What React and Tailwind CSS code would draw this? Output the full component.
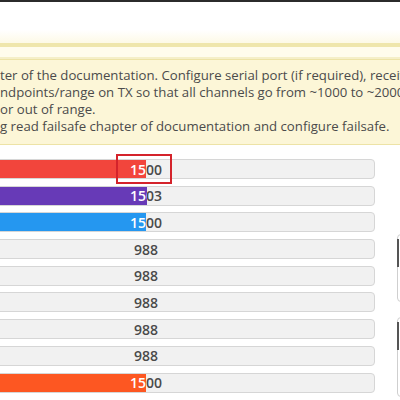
import React from 'react';

const channels = [
  { value: 1500, color: 'bg-[#f2453c]' },
  { value: 1503, color: 'bg-[#673ab7]' },
  { value: 1500, color: 'bg-[#2597f0]' },
  { value: 988, color: 'bg-[#fd8a3a]' },
  { value: 988, color: 'bg-[#fd8a3a]' },
  { value: 988, color: 'bg-[#fd8a3a]' },
  { value: 988, color: 'bg-[#fd8a3a]' },
  { value: 988, color: 'bg-[#fd8a3a]' },
  { value: 1500, color: 'bg-[#fd5722]' },
];

const noticeLines = [
  'ter of the documentation. Configure serial port (if required), receiver mode (serial/ppm/pwm)',
  'ndpoints/range on TX so that all channels go from ~1000 to ~2000. Set midpoint',
  'or out of range.',
  'g read failsafe chapter of documentation and configure failsafe.',
];

// bar spans 1000..2000
const fillPct = (v) => Math.max(0, Math.min(100, ((v - 1000) / 1000) * 100));

const ChannelBar = ({ value, color }) => (
  <div className="relative h-[20px] w-[458px] rounded-[4px] border border-[#d6d6d6] bg-[#f1f1f1] overflow-hidden">
    <div className="absolute inset-0 flex items-center justify-center text-[14px] font-semibold text-[#4a4a4a]">
      {value}
    </div>
    <div className={`absolute left-0 top-0 bottom-0 overflow-hidden ${color}`} style={{ width: `${fillPct(value)}%` }}>
      <div className="flex h-full w-[456px] items-center justify-center text-[14px] font-semibold text-white">
        {value}
      </div>
    </div>
  </div>
);

const App = () => {
  return (
    <div className="relative h-[400px] w-[400px] overflow-hidden bg-white font-['Open_Sans',sans-serif]">
      {/* top window edge */}
      <div className="h-[2px] bg-[#2b2b2b]" />
      <div className="h-[28px] bg-white" />
      <div className="h-[13px] bg-gradient-to-b from-white to-[#fdf9e6]" />
      <div className="h-[4px] bg-[#efe6ac]" />
      <div className="h-[10px] bg-[#fffcec]" />
      <div className="h-[2px] bg-[#f5efc8]" />

      {/* receiver notice */}
      <div className="h-[86px] border-y border-[#ede3a6] bg-[#fcf6d7] pt-[7px] text-[13.2px] leading-[17px] text-[#4b4b4b]">
        {noticeLines.map((line) => (
          <div key={line} className="whitespace-nowrap">
            {line}
          </div>
        ))}
      </div>

      {/* channels */}
      <div className="mt-[14px] flex gap-[22px]">
        <div className="-ml-[83px] flex flex-col gap-[6.7px]">
          {channels.map((ch, i) => (
            <ChannelBar key={i} value={ch.value} color={ch.color} />
          ))}
        </div>
        <div className="flex flex-col pt-[75px] gap-[15px]">
          <div className="relative h-[68px] w-[40px] rounded-[4px] border border-[#cfcfcf]">
            <div className="absolute -left-px top-[4px] h-[28px] w-[2px] bg-[#555]" />
          </div>
          <div className="relative h-[80px] w-[40px] rounded-[4px] border border-[#cfcfcf]">
            <div className="absolute -left-px top-[4px] h-[28px] w-[2px] bg-[#555]" />
          </div>
        </div>
      </div>

      {/* highlight annotation */}
      <div className="absolute left-[116px] top-[154px] h-[30px] w-[56px] border-2 border-[#d4232b]" />
    </div>
  );
};

export default App;
